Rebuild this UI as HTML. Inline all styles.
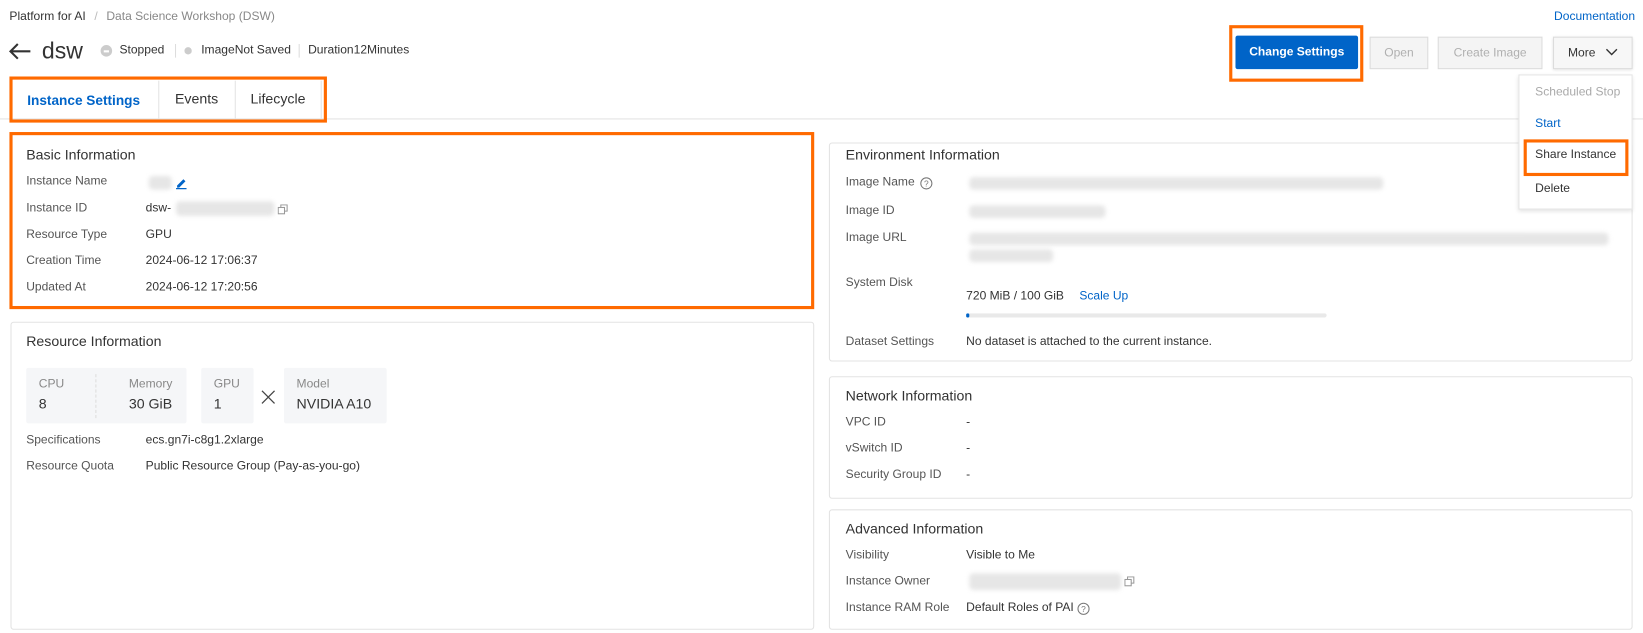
<!DOCTYPE html>
<html><head><meta charset="utf-8"><style>
*{margin:0;padding:0;box-sizing:border-box}
html,body{width:1643px;height:632px;overflow:hidden;background:#fff}
#w{position:absolute;left:0;top:0;width:1568px;height:604px;transform:scale(1.0479);transform-origin:0 0;font-family:"Liberation Sans",sans-serif;font-size:11.5px;color:#333}
.a{position:absolute;white-space:nowrap}
.lb{color:#555}
.panel{position:absolute;border:1px solid #e3e3e3;border-radius:3px;background:#fff}
.t{font-size:13.5px;color:#333}
.or{position:absolute;border:3px solid #ff6a00}
.blur{position:absolute;background:#e6e6e6;border-radius:4px;filter:blur(2px)}
.btn{position:absolute;height:32px;line-height:30px;text-align:center;border:1px solid #dcdcdc;background:#f4f4f4;color:#b0b0b0;font-size:11.5px}
.box{position:absolute;background:#f5f6f8;border-radius:2px}
.sm{font-size:11.5px;color:#888}
.big{font-size:13.5px;color:#333}
</style></head><body><div id="w">

<div class="a" style="left:9px;top:10px;color:#333">Platform for AI <span style="color:#bbb;margin:0 5px">/</span> <span style="color:#888">Data Science Workshop (DSW)</span></div>
<div class="a" style="left:1483px;top:10px;color:#0064c8">Documentation</div>

<svg class="a" style="left:8px;top:40px" width="22" height="18" viewBox="0 0 22 18"><path d="M21 9H2M9 2L2 9l7 7" fill="none" stroke="#333" stroke-width="2"/></svg>
<div class="a" style="left:40px;top:36px;font-size:22px;color:#333">dsw</div>
<div class="a" style="left:96px;top:43px;width:11px;height:11px;border-radius:50%;background:#ccc"><div style="position:absolute;left:3px;top:5px;width:5px;height:1.5px;background:#fff"></div></div>
<div class="a" style="left:114px;top:42px">Stopped</div>
<div class="a" style="left:167px;top:42px;width:1px;height:13px;background:#ddd"></div>
<div class="a" style="left:176px;top:45px;width:7px;height:7px;border-radius:50%;background:#ccc"></div>
<div class="a" style="left:192px;top:42px">ImageNot Saved</div>
<div class="a" style="left:285px;top:42px;width:1px;height:13px;background:#ddd"></div>
<div class="a" style="left:294px;top:42px">Duration12Minutes</div>

<div class="btn" style="left:1179px;top:34px;width:117px;background:#0064c8;border-color:#0064c8;color:#fff;font-weight:bold;border-radius:2px">Change Settings</div>
<div class="or" style="left:1173px;top:24px;width:128px;height:54px"></div>
<div class="btn" style="left:1307px;top:35px;width:56px;height:31px">Open</div>
<div class="btn" style="left:1372px;top:35px;width:100px;height:31px">Create Image</div>
<div class="btn" style="left:1482px;top:35px;width:76px;height:31px;background:#f7f7f7;color:#333;box-shadow:0 1px 3px rgba(0,0,0,.15)">More <svg width="12" height="8" viewBox="0 0 12 8" style="margin-left:6px"><path d="M1 1l5 5 5-5" fill="none" stroke="#333" stroke-width="1.3"/></svg></div>

<div class="a" style="left:0;top:113px;width:1568px;height:1px;background:#e3e3e3"></div>
<div class="a" style="left:151px;top:77px;width:1px;height:36px;background:#e3e3e3"></div>
<div class="a" style="left:224px;top:77px;width:1px;height:36px;background:#e3e3e3"></div>
<div class="a" style="left:306px;top:77px;width:1px;height:36px;background:#e3e3e3"></div>
<div class="a" style="left:26px;top:88px;font-size:13px;font-weight:bold;color:#0064c8">Instance Settings</div>
<div class="a" style="left:167px;top:87px;font-size:13.5px">Events</div>
<div class="a" style="left:239px;top:87px;font-size:13.5px">Lifecycle</div>
<div class="or" style="left:9px;top:73px;width:303px;height:44px"></div>

<div class="a t" style="left:25px;top:140px">Basic Information</div>
<div class="a lb" style="left:25px;top:167px">Instance Name</div>
<div class="blur" style="left:142px;top:168px;width:22px;height:13px"></div>
<svg class="a" style="left:167px;top:168px" width="12" height="13" viewBox="0 0 12 13"><path d="M2 9l6-6 2 2-6 6H2z" fill="#0064c8"/><path d="M1 12h10" stroke="#0064c8" stroke-width="1.3"/></svg>
<div class="a lb" style="left:25px;top:193px">Instance ID</div>
<div class="a" style="left:139px;top:193px">dsw-</div>
<div class="blur" style="left:168px;top:192px;width:94px;height:14px"></div>
<svg class="a" style="left:265px;top:195px" width="10" height="10" viewBox="0 0 10 10"><rect x="0.5" y="3" width="6" height="6" fill="none" stroke="#999"/><path d="M3 3V.5h6v6H6.5" fill="none" stroke="#999"/></svg>
<div class="a lb" style="left:25px;top:218px">Resource Type</div><div class="a" style="left:139px;top:218px">GPU</div>
<div class="a lb" style="left:25px;top:243px">Creation Time</div><div class="a" style="left:139px;top:243px">2024-06-12 17:06:37</div>
<div class="a lb" style="left:25px;top:268px">Updated At</div><div class="a" style="left:139px;top:268px">2024-06-12 17:20:56</div>
<div class="or" style="left:9px;top:126px;width:768px;height:169px"></div>

<div class="panel" style="left:10px;top:307px;width:767px;height:294px"></div>
<div class="a t" style="left:25px;top:318px">Resource Information</div>
<div class="box" style="left:25px;top:351px;width:153px;height:53px"></div>
<div class="a" style="left:91px;top:357px;width:0;height:42px;border-left:1px dashed #ddd"></div>
<div class="a sm" style="left:37px;top:361px">CPU</div><div class="a big" style="left:37px;top:378px">8</div>
<div class="a sm" style="left:123px;top:361px">Memory</div><div class="a big" style="left:123px;top:378px">30 GiB</div>
<div class="box" style="left:192px;top:351px;width:50px;height:53px"></div>
<div class="a sm" style="left:204px;top:361px">GPU</div><div class="a big" style="left:204px;top:378px">1</div>
<svg class="a" style="left:249px;top:372px" width="14" height="14" viewBox="0 0 14 14"><path d="M1 1l12 12M13 1L1 13" stroke="#444" stroke-width="1.2"/></svg>
<div class="box" style="left:271px;top:351px;width:98px;height:53px"></div>
<div class="a sm" style="left:283px;top:361px">Model</div><div class="a big" style="left:283px;top:378px">NVIDIA A10</div>
<div class="a lb" style="left:25px;top:414px">Specifications</div><div class="a" style="left:139px;top:414px">ecs.gn7i-c8g1.2xlarge</div>
<div class="a lb" style="left:25px;top:439px">Resource Quota</div><div class="a" style="left:139px;top:439px">Public Resource Group (Pay-as-you-go)</div>

<div class="panel" style="left:791px;top:136px;width:767px;height:209px"></div>
<div class="a t" style="left:807px;top:140px">Environment Information</div>
<div class="a lb" style="left:807px;top:168px">Image Name</div>
<svg class="a" style="left:878px;top:169px" width="12" height="12" viewBox="0 0 12 12"><circle cx="6" cy="6" r="5.3" fill="none" stroke="#777"/><text x="6" y="9" font-size="8" text-anchor="middle" fill="#777" font-family="Liberation Sans">?</text></svg>
<div class="blur" style="left:925px;top:169px;width:395px;height:12px"></div>
<div class="a lb" style="left:807px;top:195px">Image ID</div>
<div class="blur" style="left:925px;top:196px;width:130px;height:12px"></div>
<div class="a lb" style="left:807px;top:221px">Image URL</div>
<div class="blur" style="left:925px;top:222px;width:610px;height:12px"></div>
<div class="blur" style="left:925px;top:238px;width:80px;height:12px"></div>
<div class="a lb" style="left:807px;top:264px">System Disk</div>
<div class="a" style="left:922px;top:277px">720 MiB / 100 GiB</div>
<div class="a" style="left:1030px;top:277px;color:#0064c8">Scale Up</div>
<div class="a" style="left:922px;top:299px;width:344px;height:4px;background:#e9e9e9;border-radius:2px"></div>
<div class="a" style="left:922px;top:299px;width:3px;height:4px;background:#0064c8;border-radius:2px"></div>
<div class="a lb" style="left:807px;top:320px">Dataset Settings</div>
<div class="a" style="left:922px;top:320px">No dataset is attached to the current instance.</div>

<div class="panel" style="left:791px;top:359px;width:767px;height:117px"></div>
<div class="a t" style="left:807px;top:370px">Network Information</div>
<div class="a lb" style="left:807px;top:397px">VPC ID</div><div class="a" style="left:922px;top:397px">-</div>
<div class="a lb" style="left:807px;top:422px">vSwitch ID</div><div class="a" style="left:922px;top:422px">-</div>
<div class="a lb" style="left:807px;top:447px">Security Group ID</div><div class="a" style="left:922px;top:447px">-</div>

<div class="panel" style="left:791px;top:486px;width:767px;height:115px"></div>
<div class="a t" style="left:807px;top:497px">Advanced Information</div>
<div class="a lb" style="left:807px;top:524px">Visibility</div><div class="a" style="left:922px;top:524px">Visible to Me</div>
<div class="a lb" style="left:807px;top:549px">Instance Owner</div>
<div class="blur" style="left:925px;top:547px;width:145px;height:16px"></div>
<svg class="a" style="left:1073px;top:550px" width="10" height="10" viewBox="0 0 10 10"><rect x="0.5" y="3" width="6" height="6" fill="none" stroke="#999"/><path d="M3 3V.5h6v6H6.5" fill="none" stroke="#999"/></svg>
<div class="a lb" style="left:807px;top:574px">Instance RAM Role</div>
<div class="a" style="left:922px;top:574px">Default Roles of PAI</div>
<svg class="a" style="left:1028px;top:575px" width="12" height="12" viewBox="0 0 12 12"><circle cx="6" cy="6" r="5.3" fill="none" stroke="#777"/><text x="6" y="9" font-size="8" text-anchor="middle" fill="#777" font-family="Liberation Sans">?</text></svg>

<div class="a" style="left:1449px;top:71px;width:109px;height:129px;background:#fff;border:1px solid #e5e5e5;box-shadow:0 2px 4px rgba(0,0,0,.12)"></div>
<div class="a" style="left:1465px;top:82px;color:#aaa">Scheduled Stop</div>
<div class="a" style="left:1465px;top:112px;color:#0064c8">Start</div>
<div class="a" style="left:1465px;top:142px">Share Instance</div>
<div class="a" style="left:1465px;top:174px">Delete</div>
<div class="or" style="left:1454px;top:133px;width:100px;height:35px"></div>
</div></body></html>
